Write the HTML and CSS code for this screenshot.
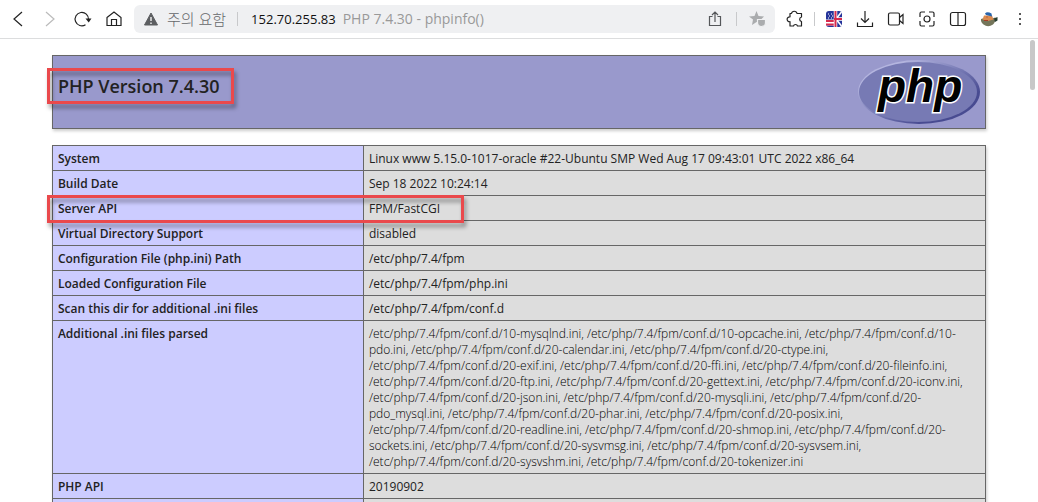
FILE: index.html
```html
<!DOCTYPE html>
<html lang="ko">
<head>
<meta charset="utf-8">
<meta name="viewport" content="width=device-width, initial-scale=1">
<title>PHP 7.4.30 - phpinfo()</title>
<link rel="stylesheet" href="styles.css">
</head>
<body>
<header class="toolbar">
  <nav class="nav" aria-label="Navigation">
    <button class="tool" aria-label="Back"><svg viewBox="0 0 20 20"><path d="M14 3 6 10l8 7"/></svg></button>
    <button class="tool tool-off" aria-label="Forward" disabled><svg viewBox="0 0 20 20"><path d="m6 3 8 7-8 7"/></svg></button>
    <button class="tool" aria-label="Reload"><svg viewBox="0 0 20 20"><path d="M13.500 15.700A6.700 6.700 0 1 1 16.500 10.500"/><path class="solid" d="m13.500 9.500 3.200 4 2.800-4z"/></svg></button>
    <button class="tool" aria-label="Home"><svg viewBox="0 0 20 20"><path d="M3 8.500 10 3l7 5.500V16.500H3zM7.500 16.500v-6h5v6"/></svg></button>
  </nav>
  <div class="address">
    <button class="security"><svg class="warn" viewBox="0 0 16 16"><path d="M8 2 14.500 14h-13z" fill="#5c5e61" stroke="#5c5e61" stroke-linejoin="round"/><path d="M8 6v4M8 11.500v1.500" stroke="#fff" stroke-width="1.300"/></svg><span>주의 요함</span></button>
    <span class="divider"></span>
    <a class="url" href="#top">152.70.255.83</a>
    <span class="page-title">PHP 7.4.30 - phpinfo()</span>
    <button class="tool share" aria-label="Share"><svg viewBox="0 0 20 20"><path d="M7.500 7.500H4.500v9h11v-9h-3M10 13V3M7 6l3-3 3 3"/></svg></button>
    <span class="divider"></span>
    <button class="tool star" aria-label="Bookmark"><svg viewBox="0 0 20 20"><path d="m8.500 2 2 5 5.500.400-3 3v4l-4.500-1.500L4 16l1-5.500L1 7.400 6.500 7z" fill="#aaacae" stroke="none"/><path d="M9.500 10.500h8v3a4 4 0 0 1-8 0z" fill="#aaacae" stroke="#eff0f2"/></svg></button>
  </div>
  <div class="tools">
    <button class="tool" aria-label="Extensions"><svg viewBox="0 0 20 20"><path d="M6.500 4.500a2.800 2.800 0 0 1 5.500 0H16.500V8a2.300 2.300 0 0 0 0 4.500v4.500H12.500c-.5-2-3.500-2-4 0H5V12.700a2.400 2.400 0 1 1 0-4.700V4.500z" stroke-linejoin="round"/></svg></button>
    <span class="divider"></span>
    <button class="tool" aria-label="Translate"><svg viewBox="0 0 20 20"><rect x="2" y="2" width="16" height="16" rx="3" fill="#26349a" stroke="none"/><path d="M4 5h1m2 0h1M5 7h1m2 0h1M4 9h1m2 0h1" stroke="#fff"/><path d="M2 12h8M2 15h8" stroke="#fff" stroke-width="3"/><path d="M2 12h8M2 15.500h8" stroke="#d62a4c" stroke-width="1.800"/><path d="m12 10 5.500-7M12 10l5.500 7" stroke="#fff" stroke-width="1.600"/><path d="M10 10h8M11.500 2v16" stroke="#fff" stroke-width="3.500"/><path d="M10 10h8M11.500 2v16" stroke="#d62a4c" stroke-width="2"/></svg></button>
    <button class="tool" aria-label="Downloads"><svg viewBox="0 0 20 20"><path d="M10 2v11M6 9.500l4 4 4-4M2.500 13.500v4h15v-4"/></svg></button>
    <button class="tool" aria-label="Record"><svg viewBox="0 0 20 20"><rect x="2.500" y="4" width="11" height="12" rx="1.500"/><path d="m13.500 8.500 3.500-3v9l-3.500-3"/></svg></button>
    <button class="tool" aria-label="Capture"><svg viewBox="0 0 20 20"><circle cx="10" cy="10" r="3"/><path d="M8 3H4.500Q3 3 3 4.500V8M12 3h3.500Q17 3 17 4.500V8M8 17H4.500Q3 17 3 15.500V12M12 17h3.500q1.500 0 1.500-1.500V12"/></svg></button>
    <button class="tool" aria-label="Split view"><svg viewBox="0 0 20 20"><rect x="2.500" y="3.500" width="15" height="13" rx="2"/><path d="M10 3.500v13"/></svg></button>
    <button class="tool" aria-label="Profile"><svg viewBox="0 0 20 20"><path d="M2 10q3-1.500 8 0l6.500-1.500q0 5-2.500 7-5 3.500-9.500 0Q1.500 13 2 10z" fill="#74755a" stroke="none"/><path d="M5 6.500h8l1.500 4L9 12l-5.500-1.500z" fill="#d98b50" stroke="none"/><path d="M6 4.500Q8 2 12.500 4.500l.5 3-6-1.500z" fill="#2865ad" stroke="none"/><path d="M15 9.500 18.500 8v3.500L16 13z" fill="#253d31" stroke="none"/><path d="M5 11.500h4M7.500 8h1" stroke="#a83b24"/></svg></button>
    <button class="tool" aria-label="Menu"><svg viewBox="0 0 20 20"><g class="solid"><circle cx="10" cy="5" r="1"/><circle cx="10" cy="10" r="1"/><circle cx="10" cy="15" r="1"/></g></svg></button>
  </div>
</header>
<div class="viewport" id="top">
  <main class="info">
    <section class="banner">
      <h1 class="mark mark-title">PHP Version 7.4.30</h1>
      <a class="logo" href="#top" aria-label="PHP logo"><svg viewBox="0 0 122 66">
        <defs><linearGradient id="rim" x1="0" y1="0" x2="1" y2="1"><stop offset=".2" stop-color="#b4b5df"/><stop offset=".5" stop-color="#7679b4"/><stop offset=".75" stop-color="#484b91"/></linearGradient></defs>
        <ellipse cx="61" cy="33" rx="61" ry="32" fill="url(#rim)"/>
        <ellipse cx="60" cy="33" rx="59" ry="30" fill="#777ab4"/>
        <text class="logo-text" x="20" y="43">php</text>
      </svg></a>
    </section>
    <table class="facts">
      <tbody>
        <tr><th scope="row">System</th><td>Linux www 5.15.0-1017-oracle #22-Ubuntu SMP Wed Aug 17 09:43:01 UTC 2022 x86_64</td></tr>
        <tr><th scope="row">Build Date</th><td>Sep 18 2022 10:24:14</td></tr>
        <tr><th scope="row"><span class="mark mark-row">Server API</span></th><td>FPM/FastCGI</td></tr>
        <tr><th scope="row">Virtual Directory Support</th><td>disabled</td></tr>
        <tr><th scope="row">Configuration File (php.ini) Path</th><td>/etc/php/7.4/fpm</td></tr>
        <tr><th scope="row">Loaded Configuration File</th><td>/etc/php/7.4/fpm/php.ini</td></tr>
        <tr><th scope="row">Scan this dir for additional .ini files</th><td>/etc/php/7.4/fpm/conf.d</td></tr>
        <tr><th scope="row">Additional .ini files parsed</th><td class="files">/etc/php/7.4/fpm/conf.d/10-mysqlnd.ini, /etc/php/7.4/fpm/conf.d/10-opcache.ini, /etc/php/7.4/fpm/conf.d/10-<br>pdo.ini, /etc/php/7.4/fpm/conf.d/20-calendar.ini, /etc/php/7.4/fpm/conf.d/20-ctype.ini,<br>/etc/php/7.4/fpm/conf.d/20-exif.ini, /etc/php/7.4/fpm/conf.d/20-ffi.ini, /etc/php/7.4/fpm/conf.d/20-fileinfo.ini,<br>/etc/php/7.4/fpm/conf.d/20-ftp.ini, /etc/php/7.4/fpm/conf.d/20-gettext.ini, /etc/php/7.4/fpm/conf.d/20-iconv.ini,<br>/etc/php/7.4/fpm/conf.d/20-json.ini, /etc/php/7.4/fpm/conf.d/20-mysqli.ini, /etc/php/7.4/fpm/conf.d/20-<br>pdo_mysql.ini, /etc/php/7.4/fpm/conf.d/20-phar.ini, /etc/php/7.4/fpm/conf.d/20-posix.ini,<br>/etc/php/7.4/fpm/conf.d/20-readline.ini, /etc/php/7.4/fpm/conf.d/20-shmop.ini, /etc/php/7.4/fpm/conf.d/20-<br>sockets.ini, /etc/php/7.4/fpm/conf.d/20-sysvmsg.ini, /etc/php/7.4/fpm/conf.d/20-sysvsem.ini,<br>/etc/php/7.4/fpm/conf.d/20-sysvshm.ini, /etc/php/7.4/fpm/conf.d/20-tokenizer.ini</td></tr>
        <tr><th scope="row">PHP API</th><td>20190902</td></tr>
        <tr><th scope="row">&nbsp;</th><td></td></tr>
      </tbody>
    </table>
  </main>
  <div class="thumb"></div>
</div>
</body>
</html>
```

FILE: styles.css
```css
*, *::after { box-sizing: border-box; }
body {
  margin: 0;
  height: 100vh;
  display: flex;
  flex-direction: column;
  overflow: hidden;
  background: #fff;
  color: #222;
  font: 12px/16px "Open Sans", "Noto Sans CJK KR", sans-serif;
}
button {
  border: 0;
  padding: 0;
  background: none;
  color: inherit;
  font: inherit;
}
a { color: inherit; text-decoration: none; }

.toolbar {
  display: flex;
  align-items: center;
  flex: none;
  height: 39px;
  padding: 0 8px;
  border-bottom: 1px solid #dcddde;
}
.nav { display: flex; gap: 12px; margin-right: 10px; }
.tool { display: block; width: 20px; height: 20px; color: #222; }
.tool svg {
  display: block;
  width: 20px;
  height: 20px;
  fill: none;
  stroke: currentColor;
  stroke-width: 1.2;
}
.tool .solid { fill: currentColor; stroke: none; }
.tool-off { color: #bbb; }
.address {
  display: flex;
  align-items: center;
  flex: 1;
  min-width: 0;
  height: 28px;
  padding: 0 7px 0 9px;
  border-radius: 6px;
  background: #eff0f2;
  font-size: 14px;
  white-space: nowrap;
}
.security { display: flex; align-items: center; gap: 8px; color: #65676a; font-size: 15px; font-weight: 300; }
.warn { width: 16px; height: 16px; fill: none; }
.divider { width: 1px; height: 14px; background: #c8c9cb; }
.address .divider { margin: 0 11px; }
.url { margin: 0 7px 0 2px; color: #111; font-size: 13px; }
.page-title { flex: 1; color: #999; }
.share { color: #55575a; }
.tools { display: flex; align-items: center; gap: 11px; margin-left: 10px; }
.tools .divider { margin: 0 -2px; }

.viewport { position: relative; flex: 1; min-height: 0; overflow: hidden; }
.thumb {
  position: absolute;
  top: 1px;
  right: 3px;
  width: 5px;
  height: 50px;
  border-radius: 3px;
  background: #c8c8c8;
}
.info { width: 90%; margin: 16px auto; }
.banner {
  display: flex;
  justify-content: space-between;
  align-items: flex-start;
  margin-bottom: 16px;
  padding: 3px 5px;
  border: 1px solid #666;
  background: #99c;
  box-shadow: 1px 2px 3px #ccc;
}
h1 { margin: 15px 0 0; font-size: 18px; line-height: 24px; font-weight: 600; }
.logo, .logo svg { display: block; width: 122px; height: 66px; }
.logo-text {
  font: italic bold 46px "Liberation Sans", sans-serif;
  fill: #000;
  stroke: #fff;
  stroke-width: 3px;
  paint-order: stroke;
}

.facts {
  width: 100%;
  table-layout: fixed;
  border-collapse: collapse;
  box-shadow: 1px 2px 3px #ccc;
}
th, td { padding: 5px 5px 3px; border: 1px solid #666; vertical-align: baseline; }
th { position: relative; width: 33.33%; background: #ccf; font-weight: 600; text-align: left; }
td { background: #ddd; }
.files { font-weight: 300; color: #000; white-space: nowrap; }

/* Red call-out frames drawn over the heading and one row */
.mark { position: relative; }
.mark::after {
  content: "";
  position: absolute;
  z-index: 1;
  border: 3px solid #ea494c;
  filter: drop-shadow(2px 4px 2px rgba(0, 0, 0, .4));
}
.mark-title::after { inset: -6px -14px -6px -11px; }
.mark-row::after { top: -5px; left: -11px; width: 417px; height: 28px; }
```
